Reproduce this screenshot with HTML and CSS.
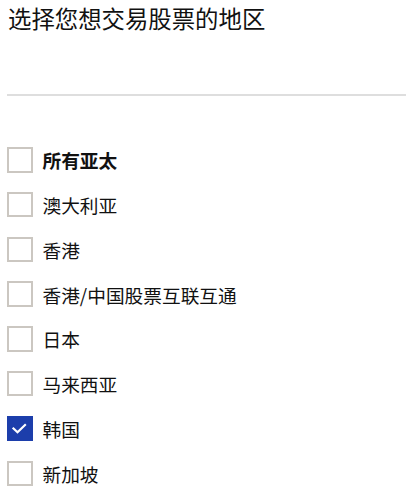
FILE: index.html
```html
<!DOCTYPE html>
<html lang="zh-CN">
<head>
<meta charset="utf-8">
<link rel="stylesheet" href="styles.css">
</head>
<body>
<div class="page">
  <h1 class="title">选择您想交易股票的地区</h1>
  <div class="divider"></div>
  <ul class="regions">
    <li class="region region-all"><span class="box"></span><span class="label">所有亚太</span></li>
    <li class="region"><span class="box"></span><span class="label">澳大利亚</span></li>
    <li class="region"><span class="box"></span><span class="label">香港</span></li>
    <li class="region"><span class="box"></span><span class="label">香港/中国股票互联互通</span></li>
    <li class="region"><span class="box"></span><span class="label">日本</span></li>
    <li class="region"><span class="box"></span><span class="label">马来西亚</span></li>
    <li class="region"><span class="box checked"><svg viewBox="0 0 25 25" width="25" height="25"><path d="M6.5 12.5 L10.5 16.2 L18 9" fill="none" stroke="#fff" stroke-width="2.2" stroke-linecap="square"/></svg></span><span class="label">韩国</span></li>
    <li class="region"><span class="box"></span><span class="label">新加坡</span></li>
  </ul>
</div>
</body>
</html>
```
FILE: styles.css
```css
* { box-sizing: border-box; }
html, body { margin: 0; padding: 0; background: #fff; }
body {
  font-family: "Noto Sans CJK SC", "Noto Sans", sans-serif;
  color: #111;
}
.page {
  padding: 2px 4px 0 8px;
}
.title {
  margin: 0;
  font-size: 23.4px;
  font-weight: 400;
  line-height: 32px;
  letter-spacing: 0;
}
.divider {
  margin-top: 60px;
  height: 2px;
  background: #dedede;
  margin-left: -1px;
}
.regions {
  list-style: none;
  margin: 51px 0 0 -1px;
  padding: 0;
  display: flex;
  flex-direction: column;
  gap: 19.3px;
}
.region {
  display: flex;
  align-items: center;
  height: 25.5px;
}
.box {
  width: 25.5px;
  height: 25.5px;
  border: 2px solid #cbc7c1;
  flex: none;
  display: flex;
  align-items: center;
  justify-content: center;
}
.box.checked {
  background: #1c3eab;
  border-color: #1c3eab;
}
.box.checked svg { flex: none; }
.label {
  margin-left: 10px;
  font-size: 18.7px;
  line-height: 25px;
  color: #111;
}
.region-all .label { font-weight: 700; }
```
